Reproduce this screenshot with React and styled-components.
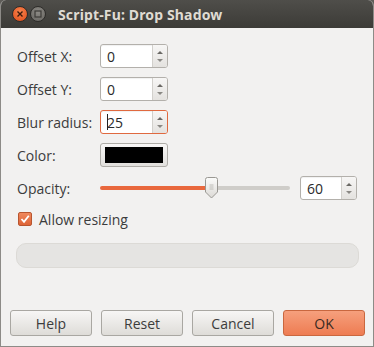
import React from 'react'
import styled, { createGlobalStyle } from 'styled-components'

const Global = createGlobalStyle`
  html, body {
    margin: 0;
    padding: 0;
    background: #5e5c58;
  }
  * {
    box-sizing: border-box;
  }
`

const Window = styled.div`
  width: 374px;
  height: 347px;
  display: flex;
  flex-direction: column;
  background: #f2f1f0;
  border: 1px solid #8d8b87;
  border-top: none;
  border-radius: 6px 6px 0 0;
  overflow: hidden;
  font-family: "Open Sans", "Noto Sans", sans-serif;
  font-size: 14px;
  color: #3c3c3c;
`

const TitleBar = styled.div`
  height: 28px;
  flex: none;
  display: flex;
  align-items: center;
  padding-left: 11px;
  gap: 2px;
  background: linear-gradient(#4f4e4a, #3c3b37);
`

const WinButton = styled.div`
  width: 16px;
  height: 16px;
  border-radius: 50%;
  display: flex;
  align-items: center;
  justify-content: center;
  background: ${p => p.close
    ? 'radial-gradient(circle at 50% 35%, #f7844f, #df4a17)'
    : 'radial-gradient(circle at 50% 35%, #8c8a85, #65635f)'};
  border: 1px solid #2e2d2a;
`

const Title = styled.div`
  margin-left: 10px;
  font-family: "Noto Sans", "Open Sans", sans-serif;
  font-weight: 700;
  font-size: 14px;
  color: #dfdbd2;
  letter-spacing: 0.15px;
`

const Body = styled.div`
  flex: 1;
  display: flex;
  flex-direction: column;
  padding: 16px 14px 0 15px;
`

const Form = styled.div`
  display: flex;
  flex-direction: column;
  gap: 9px;
`

const Row = styled.div`
  display: flex;
  align-items: center;
  height: 24px;
`

const Label = styled.div`
  width: 84px;
  padding-left: 1px;
  flex: none;
`

const Spin = styled.div`
  display: flex;
  height: 24px;
  width: ${p => p.w || 68}px;
  flex: none;
  border: 1px solid ${p => p.focus ? '#e0693f' : '#b3b0ab'};
  border-radius: 3px;
  background: #fff;
  overflow: hidden;
  box-shadow: inset 0 1px 1px rgba(0,0,0,0.06);
`

const SpinValue = styled.div`
  flex: 1;
  display: flex;
  align-items: center;
  padding-left: 6px;
  font-size: 14px;
  color: #2a2a2a;
`

const Caret = styled.span`
  display: inline-block;
  width: 1px;
  height: 16px;
  background: #222;
  margin-right: -1px;
`

const SpinButtons = styled.div`
  width: 15px;
  flex: none;
  display: flex;
  flex-direction: column;
  align-items: center;
  justify-content: center;
  gap: 5px;
  border-left: 1px solid #d2d0cc;
  background: linear-gradient(#f7f6f5, #e4e2df);
`

const Arrow = styled.div`
  width: 0;
  height: 0;
  border-left: 3px solid transparent;
  border-right: 3px solid transparent;
  ${p => p.down
    ? 'border-top: 3px solid #8a8884;'
    : 'border-bottom: 3px solid #6a6864;'}
`

const ColorButton = styled.div`
  width: 68px;
  height: 24px;
  padding: 3px 4px;
  border: 1px solid #aeaca7;
  border-radius: 3px;
  background: linear-gradient(#f8f7f6, #e2e0dd);
`

const Swatch = styled.div`
  width: 100%;
  height: 100%;
  background: #000;
`

const Slider = styled.div`
  position: relative;
  width: 190px;
  margin-right: 10px;
  height: 24px;
  display: flex;
  align-items: center;
`

const Track = styled.div`
  width: 100%;
  height: 4px;
  border-radius: 2px;
  background: linear-gradient(to right, #e9683d 0 ${p => p.fill}px, #cfcdc9 ${p => p.fill}px);
`

const Thumb = styled.svg`
  position: absolute;
  top: 1px;
  left: ${p => p.at}px;
`

const CheckRow = styled.div`
  display: flex;
  align-items: center;
  gap: 7px;
  height: 20px;
  margin-top: 9px;
  padding-left: 2px;
  font-size: 14px;
`

const Check = styled.div`
  width: 14px;
  height: 14px;
  border-radius: 2px;
  border: 1px solid #b8552f;
  background: linear-gradient(#f0885c, #de6437);
  display: flex;
  align-items: center;
  justify-content: center;
`

const Progress = styled.div`
  margin-top: 14px;
  height: 25px;
  border: 1px solid #dcdad6;
  border-radius: 10px;
  background: #e5e4e2;
`

const ButtonBar = styled.div`
  margin-top: auto;
  margin-bottom: 10px;
  margin-left: -6px;
  margin-right: -6px;
  display: flex;
  gap: 9px;
`

const Button = styled.div`
  width: 82px;
  height: 26px;
  display: flex;
  align-items: center;
  justify-content: center;
  border-radius: 3px;
  font-size: 14px;
  border: 1px solid ${p => p.primary ? '#c9673f' : '#a9a7a2'};
  background: ${p => p.primary
    ? 'linear-gradient(#f6a07d, #ee7c52)'
    : 'linear-gradient(#f7f6f5, #dedcd8)'};
  color: ${p => p.primary ? '#3a2a22' : '#3c3c3c'};
`

const SpinBox = ({ value, focus, w }) => (
  <Spin focus={focus} w={w}>
    <SpinValue>{focus && <Caret />}{value}</SpinValue>
    <SpinButtons>
      <Arrow />
      <Arrow down />
    </SpinButtons>
  </Spin>
)

export default function App() {
  return (
    <>
      <Global />
      <Window>
        <TitleBar>
          <WinButton close>
            <svg width="8" height="8" viewBox="0 0 8 8">
              <path d="M1.5 1.5L6.5 6.5M6.5 1.5L1.5 6.5" stroke="#3a1a0c" strokeWidth="1.4" />
            </svg>
          </WinButton>
          <WinButton>
            <svg width="8" height="8" viewBox="0 0 8 8">
              <rect x="1" y="1" width="6" height="6" fill="none" stroke="#3c3b37" strokeWidth="1.2" />
            </svg>
          </WinButton>
          <Title>Script-Fu: Drop Shadow</Title>
        </TitleBar>
        <Body>
          <Form>
            <Row>
              <Label>Offset X:</Label>
              <SpinBox value="0" />
            </Row>
            <Row>
              <Label>Offset Y:</Label>
              <SpinBox value="0" />
            </Row>
            <Row>
              <Label>Blur radius:</Label>
              <SpinBox value="25" focus />
            </Row>
            <Row>
              <Label>Color:</Label>
              <ColorButton><Swatch /></ColorButton>
            </Row>
            <Row>
              <Label>Opacity:</Label>
              <Slider>
                <Track fill={110} />
                <Thumb at={105} width="13" height="22" viewBox="0 0 13 22">
                  <defs>
                    <linearGradient id="tg" x1="0" y1="0" x2="0" y2="1">
                      <stop offset="0" stopColor="#fbfbfa" />
                      <stop offset="1" stopColor="#dcdad6" />
                    </linearGradient>
                  </defs>
                  <path d="M2.5 0.5H10.5Q12.5 0.5 12.5 2.5V15L6.5 21L0.5 15V2.5Q0.5 0.5 2.5 0.5Z" fill="url(#tg)" stroke="#9a9893" />
                  <path d="M4.5 8H8.5M4.5 10H8.5M4.5 12H8.5" stroke="#b3b1ac" strokeWidth="0.8" />
                </Thumb>
              </Slider>
              <SpinBox value="60" w={57} />
            </Row>
          </Form>
          <CheckRow>
            <Check>
              <svg width="10" height="10" viewBox="0 0 10 10">
                <path d="M1.5 5L4 7.8L8.8 1.8" fill="none" stroke="#fff" strokeWidth="1.8" />
              </svg>
            </Check>
            Allow resizing
          </CheckRow>
          <Progress />
          <ButtonBar>
            <Button>Help</Button>
            <Button>Reset</Button>
            <Button>Cancel</Button>
            <Button primary>OK</Button>
          </ButtonBar>
        </Body>
      </Window>
    </>
  )
}
